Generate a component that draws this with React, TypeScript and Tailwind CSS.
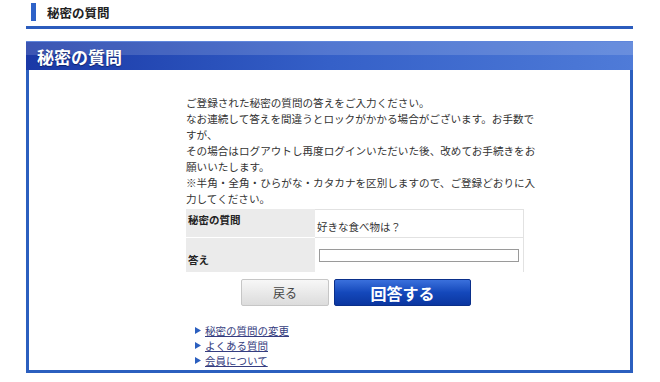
import React from "react";

const font = { fontFamily: '"Noto Sans CJK JP", "Noto Sans", sans-serif' };

function Arrow() {
  return (
    <svg width="6" height="7" viewBox="0 0 6 7" className="shrink-0">
      <path d="M0 0 L6 3.5 L0 7 Z" fill="#2b5fbf" />
    </svg>
  );
}

export default function App() {
  return (
    <div
      className="w-[660px] h-[382px] bg-white overflow-hidden text-[#333]"
      style={font}
    >
      {/* top heading */}
      <div className="h-[24px] flex items-center pl-[31px]">
        <div className="w-[5px] h-[18px] bg-[#2e62c8]" />
        <div className="ml-[11px] text-[12.5px] font-bold text-[#222] leading-none pt-[2px]">
          秘密の質問
        </div>
      </div>
      <div className="mx-[26px] mt-[2px] h-[3px] bg-[#2b5cbd] w-[607px]" />

      {/* panel */}
      <div className="ml-[26px] mt-[12px] w-[607px]">
        <div className="relative h-[29px] bg-gradient-to-r from-[#1a38a6] via-[#3560c8] to-[#4f7bd8] flex items-center pl-[11px] border-t border-[#5f86dc]">
          <div className="absolute inset-x-0 top-0 h-[13px] bg-white/15" />
          <div
            className="relative text-[17px] font-bold text-white leading-none"
            style={{ textShadow: "0 1px 1px rgba(0,0,40,0.5)" }}
          >
            秘密の質問
          </div>
        </div>
        <div className="h-[303px] border-x-[3px] border-b-[3px] border-[#2b5fbf] bg-white">
          <div className="ml-[157px] pt-[25px] w-[352px]">
            <p className="text-[10.6px] leading-[16px]">
              ご登録された秘密の質問の答えをご入力ください。
              <br />
              なお連続して答えを間違うとロックがかかる場合がございます。お手数ですが、
              <br />
              その場合はログアウトし再度ログインいただいた後、改めてお手続きをお願いいたします。
              <br />
              ※半角・全角・ひらがな・カタカナを区別しますので、ご登録どおりに入力してください。
            </p>

            {/* table */}
            <div className="mt-[2px] w-[338px] text-[10.5px]">
              <div className="flex h-[29px]">
                <div className="w-[129px] bg-[#ebebeb] border-b border-white pl-[2px] pt-[3px] font-bold text-[#222]">
                  秘密の質問
                </div>
                <div className="flex-1 border border-[#e2e2e2] border-l-0 pl-[2px] pt-[9px] text-[#333]">
                  好きな食べ物は？
                </div>
              </div>
              <div className="flex h-[34px]">
                <div className="w-[129px] bg-[#ebebeb] pl-[2px] pt-[14px] font-bold text-[#222]">
                  答え
                </div>
                <div className="flex-1 border-r border-[#e2e2e2] pl-[4px] pt-[11px]">
                  <div className="w-[200px] h-[13px] border border-[#9a9a9a] bg-white" />
                </div>
              </div>
            </div>

            {/* buttons */}
            <div className="mt-[7px] ml-[55px] flex gap-[5px]">
              <div className="w-[88px] h-[27px] rounded-[2px] border border-[#c6c6c6] bg-gradient-to-b from-[#f7f7f7] to-[#dcdcdc] flex items-center justify-center text-[12px] text-[#444]">
                戻る
              </div>
              <div className="w-[137px] h-[27px] rounded-[2px] border border-[#0a2f8a] bg-gradient-to-b from-[#3a70dc] via-[#1448bb] to-[#0b36a0] flex items-center justify-center text-[16px] font-bold text-white">
                回答する
              </div>
            </div>

            {/* links */}
            <div className="mt-[17px] ml-[9px] text-[10.5px] leading-[15px]">
              {["秘密の質問の変更", "よくある質問", "会員について"].map((t) => (
                <div key={t} className="flex items-center gap-[4px]">
                  <Arrow />
                  <span className="underline text-[#353d80]">{t}</span>
                </div>
              ))}
            </div>
          </div>
        </div>
      </div>
    </div>
  );
}
